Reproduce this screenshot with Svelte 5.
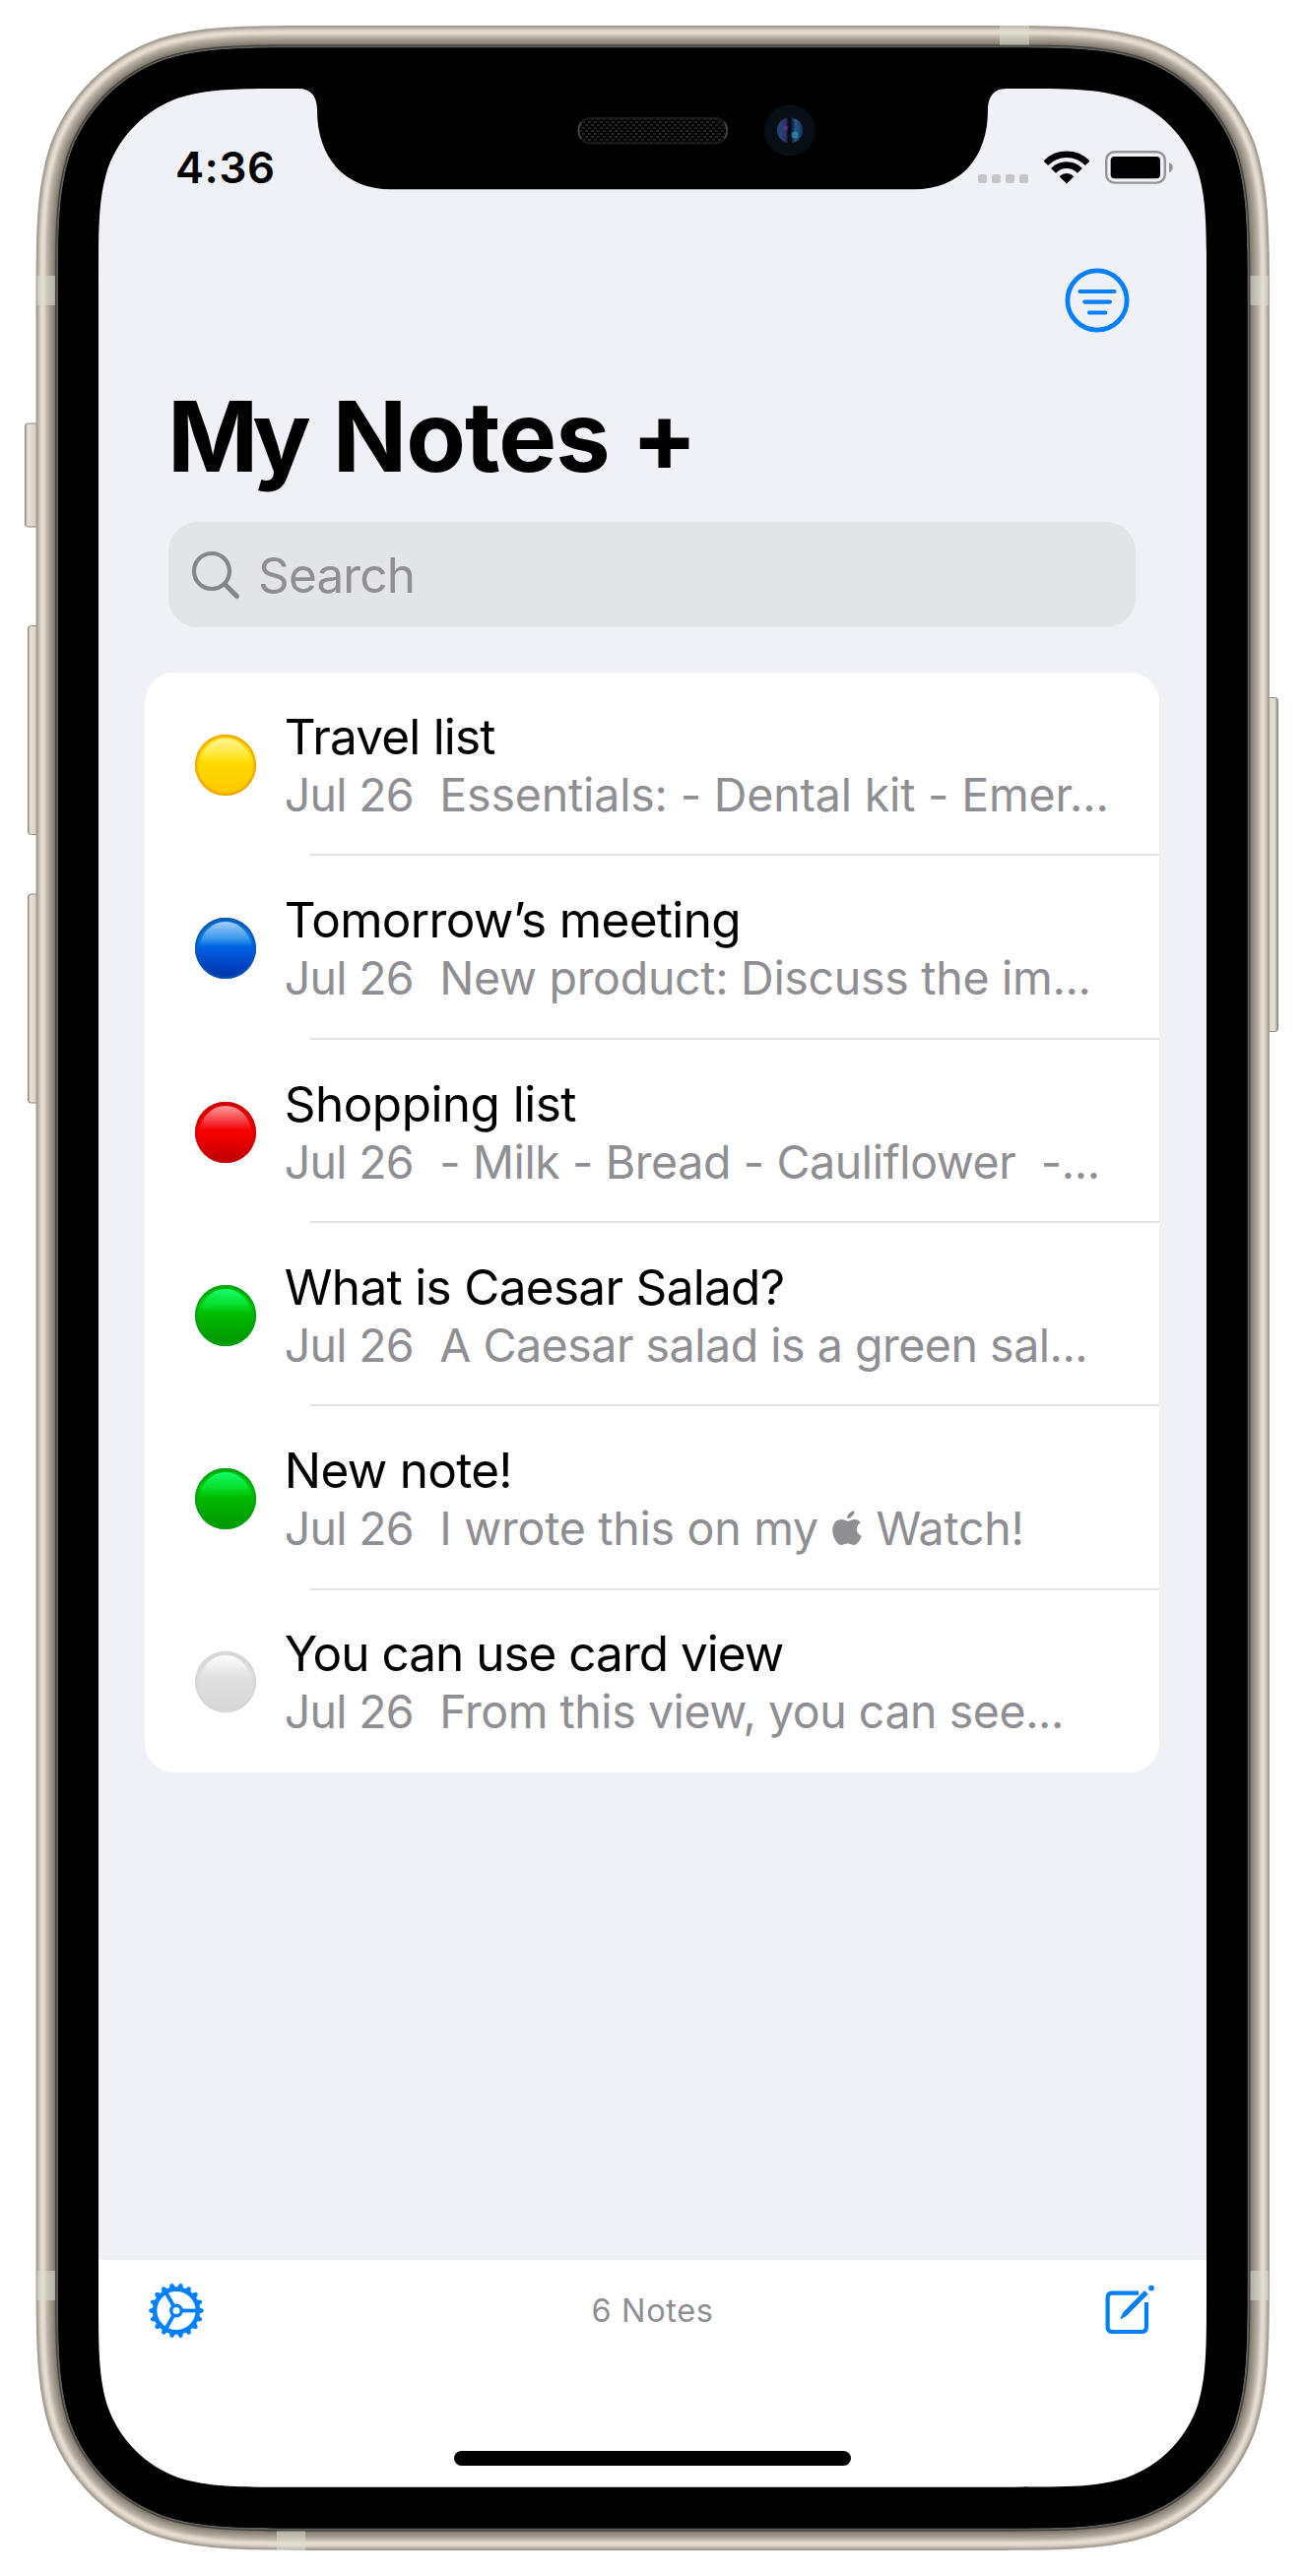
<script>
  // track / subTrack: letter spacing in px for the title and the preview line
  const notes = [
    { title: 'Travel list', text: 'Essentials: - Dental kit - Emer...', tone: 'yellow', track: -0.8, subTrack: -0.17 },
    { title: 'Tomorrow’s meeting', text: 'New product: Discuss the im...', tone: 'blue', track: -0.68, subTrack: -0.3 },
    { title: 'Shopping list', text: '- Milk - Bread - Cauliflower  -...', tone: 'red', track: -0.54, subTrack: -0.4 },
    { title: 'What is Caesar Salad?', text: 'A Caesar salad is a green sal...', tone: 'green', track: -0.7, subTrack: -0.48 },
    { title: 'New note!', text: 'I wrote this on my ', logo: true, tail: ' Watch!', tone: 'green', track: -0.7, subTrack: -0.27 },
    { title: 'You can use card view', text: 'From this view, you can see...', tone: 'white', track: -1, subTrack: -0.45 }
  ];

  // Rounded rectangle with continuous-curvature corners
  function outline(x0, y0, x1, y1, r) {
    const a = 1.528665 * r, b = 1.088493 * r, c = 0.868407 * r, d = 0.631494 * r;
    const e = 0.074911 * r, f = 0.372824 * r, g = 0.16906 * r;
    return `M${x0 + a},${y0}L${x1 - a},${y0}` +
      `C${x1 - b},${y0} ${x1 - c},${y0} ${x1 - d},${y0 + e}C${x1 - f},${y0 + g} ${x1 - g},${y0 + f} ${x1 - e},${y0 + d}C${x1},${y0 + c} ${x1},${y0 + b} ${x1},${y0 + a}` +
      `L${x1},${y1 - a}C${x1},${y1 - b} ${x1},${y1 - c} ${x1 - e},${y1 - d}C${x1 - g},${y1 - f} ${x1 - f},${y1 - g} ${x1 - d},${y1 - e}C${x1 - c},${y1} ${x1 - b},${y1} ${x1 - a},${y1}` +
      `L${x0 + a},${y1}C${x0 + b},${y1} ${x0 + c},${y1} ${x0 + d},${y1 - e}C${x0 + f},${y1 - g} ${x0 + g},${y1 - f} ${x0 + e},${y1 - d}C${x0},${y1 - c} ${x0},${y1 - b} ${x0},${y1 - a}` +
      `L${x0},${y0 + a}C${x0},${y0 + b} ${x0},${y0 + c} ${x0 + e},${y0 + d}C${x0 + g},${y0 + f} ${x0 + f},${y0 + g} ${x0 + d},${y0 + e}C${x0 + c},${y0} ${x0 + b},${y0} ${x0 + a},${y0}Z`;
  }
  const inset = (n) => outline(36.5 + n, 26 + n, 1289 - n, 2590 - n, 192 - n);
  const hole = inset(40);
  const rings = [
    [0, '#a39b90'], [1, '#a8a095'], [2, '#bab2a7'], [3, '#cbc3b8'], [4, '#d8d0c5'], [5, '#e0d8ce'], [6, '#e5ddd3'],
    [8, '#ddd5cb'], [9, '#d0c8bd'], [10, '#c4bcb1'], [11, '#bab2a7'], [12, '#b1a99e'], [13, '#aaa297'], [14, '#a39b90'],
    [15, '#9c9489'], [16, '#958d82'], [17, '#8e867b'], [18, '#857e73'], [19, '#756f65'], [19.6, '#3d3b37'], [20.6, '#5c5c5c'], [22.6, '#000']
  ];
  const black = inset(22.6) + outline(100, 90, 1225, 2525.7, 128);
  const teeth = Array.from({ length: 18 }, (_, i) => i * 20);
</script>

<main class="phone">
  <section class="screen">
    <header class="status">
      <span class="time">4:36</span>
      <div class="signals">
        <span class="cell"><i></i><i></i><i></i><i></i></span>
        <svg class="wifi" viewBox="0 0 46 34" width="46" height="34">
          <clipPath id="fan"><path d="M23 33.5 L-3 8 L-3 -12 L49 -12 L49 8 Z" /></clipPath>
          <g clip-path="url(#fan)" fill="none" stroke="#000">
            <circle cx="23" cy="33" r="29.3" stroke-width="6.6" />
            <circle cx="23" cy="33" r="18.4" stroke-width="6.8" />
            <circle cx="23" cy="33" r="5" stroke-width="10" />
          </g>
        </svg>
        <svg class="battery" viewBox="0 0 70 34" width="70" height="34">
          <rect x="1.2" y="1.2" width="59.6" height="31.4" rx="8.5" fill="none" stroke="#939397" stroke-width="2.4" />
          <rect x="5.7" y="6" width="50.3" height="22.3" rx="4" />
          <path d="M65 12c5 1.800 5 8.400 0 10.200z" fill="#939397" />
        </svg>
      </div>
    </header>

    <nav class="actions">
      <svg width="66" height="66" viewBox="-33 -33 66 66" fill="none" stroke="#0080ff" stroke-linecap="round">
        <circle r="30.100" stroke-width="4.800" />
        <path d="M-17.500 -9h35M-12.700 1.600h25.600M-8 12.500h16.300" stroke-width="4.200" />
      </svg>
    </nav>

    <h1><span class="cap">M</span><span class="low">y</span> Notes +</h1>

    <div class="search">
      <svg width="52" height="52" viewBox="0 0 52 52" fill="none" stroke="#85868b" stroke-linecap="round">
        <circle cx="22" cy="22" r="18" stroke-width="4.200" />
        <path d="M35.200 35.200L47.500 47.500" stroke-width="5" />
      </svg>
      <span>Search</span>
    </div>

    <ul class="list">
      {#each notes as note}
        <li>
          <span class="ball {note.tone}"></span>
          <div class="body">
            <p class="title" style:letter-spacing="{note.track}px">{note.title}</p>
            <p class="sub"><span class="date">Jul 26</span><span class="text" style:letter-spacing="{note.subTrack}px">{note.text}{#if note.logo}<svg class="apple" viewBox="0 0 30 36" width="30" height="36" fill="#8e8e93"><path d="M22.500 0.300c0.300 4-3.600 8-7.300 7.800C14.700 4.300 18.500 0.700 22.500 0.300zM28.700 12.200c-5.700 3.400-4.800 11.300 1.100 13.600C28.300 30.300 25.300 35 22 35c-2.600 0-3.500-1.500-6.500-1.500S11.500 35 9.200 35C5.200 35 0.300 27 0.300 20 0.300 12.800 4.700 9 9.200 9c2.800 0 4.800 1.700 6.600 1.700C17.500 10.700 19.700 8.900 23 8.900c2.300 0 4.300 1.200 5.700 3.300z" /></svg>{note.tail}{/if}</span></p>
          </div>
        </li>
      {/each}
    </ul>

    <footer class="toolbar">
      <div class="bar">
        <svg width="56" height="56" viewBox="-28 -28.500 56 56" fill="none" stroke="#0080ff">
          <circle r="21.900" stroke-width="4.600" />
          <circle r="5.200" stroke-width="3.400" />
          {#each teeth as a}
            <path d="M22 -3.600L27 -1.700Q28.600 0 27 1.700L22 3.600Z" fill="#0080ff" stroke="none" transform="rotate({a})" />
          {/each}
          {#each [0, 120, 240] as a}
            <path d="M6 0H21" stroke-width="3.800" transform="rotate({a})" />
          {/each}
        </svg>
        <span class="count">6 Notes</span>
        <svg width="52" height="52" viewBox="0 0 52 52" fill="none" stroke="#0080ff" stroke-width="4.200">
          <path d="M35 8.600H8.500Q3.600 8.600 3.600 13.500V43Q3.600 48 8.500 48H38Q43 48 43 43V18" />
          <path d="M41 6.600l3.200 3.200L22.500 31.600 16.800 34.800 19.600 28.500Z" fill="#0080ff" stroke-width="1" />
          <circle cx="48" cy="3.600" r="2.900" fill="#0080ff" stroke="none" />
        </svg>
      </div>
      <div class="home"></div>
    </footer>
  </section>

  <svg class="bezel" viewBox="0 0 1325 2616" width="1325" height="2616">
    <defs>
      <linearGradient id="key" x1="0" x2="1" y1="0" y2="0">
        <stop offset="0" stop-color="#99938a" /><stop offset=".15" stop-color="#e4dfd3" /><stop offset=".45" stop-color="#ded7cd" /><stop offset="1" stop-color="#c6bfb4" />
      </linearGradient>
      <linearGradient id="keyR" x1="1" x2="0" y1="0" y2="0">
        <stop offset="0" stop-color="#8f8b80" /><stop offset=".25" stop-color="#e6e1d5" /><stop offset="1" stop-color="#cfc8bd" />
      </linearGradient>
      <pattern id="mesh" width="6" height="6" patternUnits="userSpaceOnUse">
        <rect width="6" height="6" fill="#050505" />
        <path d="M0 1h3M3 4h3" stroke="#292929" stroke-width="1.600" />
      </pattern>
      <linearGradient id="lens" x1="0" x2="1" y1="0" y2="0">
        <stop offset="0" stop-color="#1c4f78" /><stop offset=".33" stop-color="#33306a" /><stop offset=".46" stop-color="#05070f" />
        <stop offset=".54" stop-color="#07101f" /><stop offset=".72" stop-color="#22588a" /><stop offset="1" stop-color="#123356" />
      </linearGradient>
    </defs>
    <g stroke="#8d877c" stroke-width="1">
      <rect x="25.500" y="430" width="16" height="105" rx="3" fill="url(#key)" />
      <rect x="28.500" y="635.500" width="14" height="212" rx="3" fill="url(#key)" />
      <rect x="28.500" y="908" width="14" height="212" rx="3" fill="url(#key)" />
      <rect x="1283" y="708.500" width="14.500" height="339" rx="3" fill="url(#keyR)" />
    </g>
    {#each rings as [n, color]}
      <path d={inset(n) + hole} fill={color} fill-rule="evenodd" />
    {/each}
    <g fill="#dcdcd0" opacity=".55">
      <rect x="37.500" y="280" width="18.500" height="30" /><rect x="1269.500" y="280" width="18.500" height="30" />
      <rect x="37.500" y="2306" width="18.500" height="30" /><rect x="1269.500" y="2306" width="18.500" height="30" />
      <rect x="1015" y="26" width="30" height="19.600" /><rect x="281" y="2570.500" width="29" height="19.500" />
    </g>
    <path d={black} fill-rule="evenodd" />
    <path d="M303 88V90C316 90 322 98 322 112C322 160 350 192.300 397 192.300H928C975 192.300 1003 160 1003 112C1003 98 1009 90 1022 90V88Z" />
    <rect x="587" y="120" width="151.500" height="25.500" rx="12.750" fill="url(#mesh)" stroke="#1b1b1b" stroke-width="2" />
    <path d="M590 124c-3.500 5-3.500 12 0 17M735.500 124c3.500 5 3.500 12 0 17" fill="none" stroke="#4a4a4a" stroke-width="1.500" />
    <circle cx="802" cy="132.300" r="26" fill="#090d14" />
    <circle cx="802" cy="132.300" r="13" fill="url(#lens)" />
    <circle cx="797.500" cy="130" r="2.500" fill="#5a3a8a" opacity=".7" />
    <circle cx="807" cy="137" r="3.500" fill="#3f9ac8" opacity=".6" />
  </svg>
</main>

<style>
  :global(body) { margin: 0; background: #fff; }
  .phone {
    position: relative; width: 1325px; height: 2616px; box-sizing: border-box;
    padding: 90px 100px; font-family: Inter, 'Liberation Sans', sans-serif; color: #000;
  }
  .bezel { position: absolute; left: 0; top: 0; }
  .screen { display: flex; flex-direction: column; height: 2436px; background: #f0f1f7; }
  .status { display: flex; justify-content: space-between; padding: 58px 33px 0 78px; height: 44px; }
  .time { font-size: 43.800px; font-weight: 600; line-height: 45px; letter-spacing: .7px; }
  .signals { display: flex; align-items: flex-start; padding-top: 5px; }
  .cell { display: flex; gap: 5px; margin: 24px 16px 0 0; }
  .cell i { width: 9px; height: 9px; border-radius: 2.500px; background: #c4c4c9; }
  .wifi { margin-right: 16px; }
  .actions { display: flex; justify-content: flex-end; padding: 80px 77.700px 0 0; height: 66px; }
  h1 { margin: 49.700px 0 0 70px; font-size: 99px; line-height: 110px; font-weight: 700; letter-spacing: -1px; }
  .cap { letter-spacing: -6px; }
  .low { letter-spacing: -.5px; }
  .search {
    display: flex; align-items: center; gap: 17px; height: 107px; box-sizing: border-box;
    margin: 32.300px 72.500px 0 71px; padding: 2px 0 0 22px; border-radius: 30px;
    background: #e3e4e8; color: #8e8e93; font-size: 49.500px; letter-spacing: -.85px;
  }
  .list { list-style: none; margin: 45.700px 48.300px 0 47.400px; padding: 0; border-radius: 30px; background: #fff; }
  li { display: flex; height: 186.270px; position: relative; }
  li:not(:last-child)::after { content: ''; position: absolute; left: 168px; right: 0; bottom: -.5px; height: 2px; background: #e2e2e4; }
  .ball { position: relative; width: 62px; height: 62px; border-radius: 50%; margin: 63.300px 28.400px 0 51px; flex: none; }
  .ball::before { content: ''; position: absolute; inset: 4px 5px; border-radius: 50%; background: linear-gradient(var(--shine), transparent 46%); }
  .yellow { --shine: #fff59a; background: linear-gradient(#ffdf00 10%, #ffe000 32%, #ffd500 60%, #ffc800); box-shadow: inset 0 0 2px 2px #f0a000; }
  .blue { --shine: #a4d2ff; background: linear-gradient(#0a68cc, #0a7ee6 34%, #005ee0 52%, #0044c4 76%, #0032a8); box-shadow: inset 0 0 2px 2px #0656b8; }
  .red { --shine: #ff9d9d; background: linear-gradient(#d60000, #f40008 34%, #f40000 55%, #d40000 80%, #b80000); box-shadow: inset 0 0 2px 2px #cc0006; }
  .green { --shine: #14ff6a; background: linear-gradient(#00b414, #00d008 30%, #00b800 50%, #009600); box-shadow: inset 0 0 2px 2px #02a010; }
  .white { --shine: #fff; background: linear-gradient(#d8d8d8, #dedede 40%, #d8d8d8); box-shadow: inset 0 0 2px 2px #d6d6d6; }
  .body { padding-top: 35.300px; }
  p { margin: 0; white-space: pre; }
  .title { font-size: 49.500px; line-height: 60px; }
  .sub { font-size: 46.500px; line-height: 58px; color: #8e8e93; display: flex; }
  .date { width: 157.500px; letter-spacing: -.75px; }
  .apple { vertical-align: -1px; margin: 0 1.500px; }
  .toolbar { margin-top: auto; background: #fff; height: 231px; }
  .bar { display: flex; align-items: center; justify-content: space-between; padding: 23px 52px 0 51px; }
  .count { font-size: 32.500px; letter-spacing: .6px; color: #8e8e93; margin-right: 3px; }
  .home { width: 403px; height: 15px; border-radius: 8px; background: #000; margin: 115px auto 0; }
</style>
